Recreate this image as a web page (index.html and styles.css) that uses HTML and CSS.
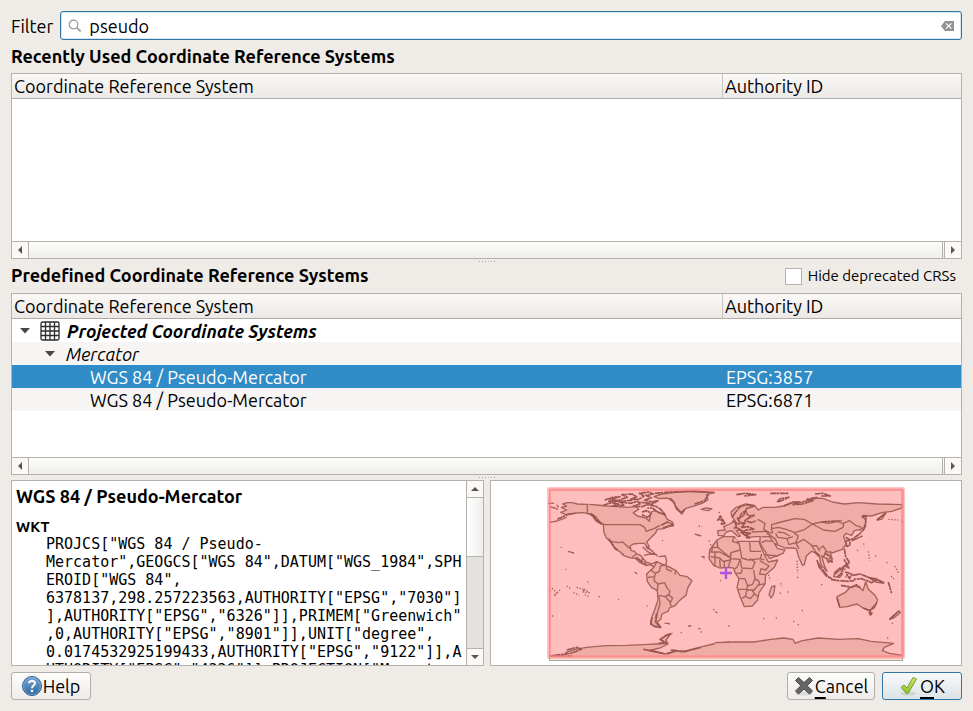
FILE: index.html
```html
<!DOCTYPE html>
<html lang="en">
<head>
<meta charset="utf-8">
<title>Coordinate Reference System Selector</title>
<link rel="stylesheet" href="styles.css">
</head>
<body>
<form class="dialog">
  <div class="filter">
    <label for="filter">Filter</label>
    <div class="search">
      <svg class="search-icon" viewBox="0 0 14 14" aria-hidden="true"><circle cx="5.5" cy="5.5" r="4.3"/><path d="M8.7 8.7L12.6 12.4" stroke-width="1.8"/></svg>
      <input id="filter" type="text" value="pseudo">
      <button class="clear" type="button" aria-label="Clear">
        <svg viewBox="0 0 13 10"><path d="M4 0H13V10H4L0 5Z" fill="#929292"/><path d="M5 2.3L10.4 7.7M10.4 2.3L5 7.7" stroke="#fff" stroke-width="1.2"/></svg>
      </button>
    </div>
  </div>

  <h2 class="heading">Recently Used Coordinate Reference Systems</h2>
  <section class="panel list">
    <table class="tree">
      <thead><tr><th>Coordinate Reference System</th><th class="auth">Authority ID</th></tr></thead>
    </table>
    <div class="hscroll">
      <button type="button" aria-label="Scroll left"><svg viewBox="0 0 8 8"><path d="M6 0V8L2 4Z"/></svg></button>
      <div class="hthumb"></div>
      <button type="button" aria-label="Scroll right"><svg viewBox="0 0 8 8"><path d="M2 0V8L6 4Z"/></svg></button>
    </div>
  </section>

  <div class="heading-row">
    <span class="grip"></span>
    <h2 class="heading">Predefined Coordinate Reference Systems</h2>
    <label class="check"><input type="checkbox">Hide deprecated CRSs</label>
  </div>
  <section class="panel list">
    <table class="tree">
      <thead><tr><th>Coordinate Reference System</th><th class="auth">Authority ID</th></tr></thead>
      <tbody>
        <tr><td class="group"><div class="node">
          <svg class="expander" viewBox="0 0 10 6"><path d="M0 0H10L5 5.5Z"/></svg>
          <svg class="grid-icon" viewBox="0 0 20 20"><rect x="1" y="1" width="18" height="18" rx="1.5"/><path d="M5.5 1V19M10 1V19M14.5 1V19M1 5.500H19M1 10H19M1 14.500H19"/></svg>
          Projected Coordinate Systems</div></td><td></td></tr>
        <tr class="alt"><td class="family"><div class="node">
          <svg class="expander" viewBox="0 0 10 6"><path d="M0 0H10L5 5.500Z"/></svg>
          Mercator</div></td><td></td></tr>
        <tr class="selected"><td class="crs">WGS 84 / Pseudo-Mercator</td><td>EPSG:3857</td></tr>
        <tr class="alt"><td class="crs">WGS 84 / Pseudo-Mercator</td><td>EPSG:6871</td></tr>
      </tbody>
    </table>
    <div class="hscroll">
      <button type="button" aria-label="Scroll left"><svg viewBox="0 0 8 8"><path d="M6 0V8L2 4Z"/></svg></button>
      <div class="hthumb"></div>
      <button type="button" aria-label="Scroll right"><svg viewBox="0 0 8 8"><path d="M2 0V8L6 4Z"/></svg></button>
    </div>
  </section>

  <div class="splitter"><span class="grip"></span></div>

  <div class="details">
    <section class="panel info">
      <div class="info-text">
        <h3>WGS 84 / Pseudo-Mercator</h3>
        <h4>WKT</h4>
        <code class="wkt">PROJCS["WGS 84 / Pseudo-<br>Mercator",GEOGCS["WGS 84",DATUM["WGS_1984",SPH<br>EROID["WGS 84",<br>6378137,298.257223563,AUTHORITY["EPSG","7030"]<br>],AUTHORITY["EPSG","6326"]],PRIMEM["Greenwich"<br>,0,AUTHORITY["EPSG","8901"]],UNIT["degree",<br>0.0174532925199433,AUTHORITY["EPSG","9122"]],A<br>UTHORITY["EPSG","4326"]],PROJECTION["Mercator_</code>
      </div>
      <div class="vscroll">
        <button type="button" aria-label="Scroll up"><svg viewBox="0 0 8 8"><path d="M0 6H8L4 2Z"/></svg></button>
        <div class="vthumb"></div>
        <div class="vtrack"></div>
        <button type="button" aria-label="Scroll down"><svg viewBox="0 0 8 8"><path d="M0 2H8L4 6Z"/></svg></button>
      </div>
    </section>
    <section class="panel map">
      <svg viewBox="491 481 470 184" role="img" aria-label="Area of use">
        <rect x="549.500" y="489.500" width="353" height="171" fill="#efe9dc" stroke="#a8a49e"/>
        <rect x="549" y="489" width="355" height="168" fill="#ffbebe"/>
        <g class="land" transform="translate(540 480) scale(.3333)">
          <path d="M82 68L68 72L80 78L64 82L80 90L62 97L78 104L94 101L110 99L130 98L148 102L160 110L172 124L190 134L192 158L200 175L212 185L226 206L238 214L250 226L268 233L288 236L300 248L320 257L330 254L345 262L350 245L334 252L318 246L308 234L302 226L290 222L284 214L274 212L270 198L280 192L298 190L314 190L324 206L328 200L320 186L334 172L346 160L352 148L372 146L384 137L400 138L398 126L382 118L374 104L358 98L344 92L334 96L330 110L328 124L318 114L292 108L280 98L296 88L288 80L262 82L232 80L200 78L170 75L142 73L112 72L96 68Z"/>
          <path d="M142 73V100L160 104L176 124L192 134H300L314 142L318 154L342 146L360 136M212 184L236 188L248 186L270 206M276 232L290 222M300 245L310 236"/>
          <path d="M342 50L358 56L382 54L400 66L410 88L426 102L436 86L456 80L486 70L504 60L500 44L520 38L490 36L446 34L402 38L366 42Z"/>
          <path d="M350 245L342 262L330 272L320 282L322 304L334 322L352 332L354 360L346 384L336 410L332 428L342 438L362 442L352 426L362 418L366 402L384 394L390 382L404 378L418 362L438 346L444 322L456 302L442 290L420 286L408 272L390 262L370 254Z"/>
          <path d="M332 270L346 280L358 274L362 258L378 254L380 268L396 274M346 280L344 290L324 292M344 292L342 302L354 312L352 332M354 312L374 308L380 322L390 334L386 344L376 350L358 346M386 344L398 354L390 370L394 378M356 346L360 372L352 398L348 426M376 350L390 366M408 272L404 284"/>
          <path d="M28 525L90 524L76 518L104 508L140 502L196 497L260 496L310 494L350 492L380 490L362 480L372 470L392 462L378 480L384 492L360 504L326 512L376 522L402 514L440 512L478 502L520 492L570 486V526Z" stroke="none"/>
          <path class="thin" d="M76 518L104 508L140 502L196 497L260 496L310 494L350 492L380 490L362 480L372 470L392 462L378 480L384 492L360 504L326 512L376 522L402 514L440 512L478 502L520 492L570 486"/>
          <path class="thin" d="M484 88L494 84L516 86L504 92ZM312 226L330 222L350 224L352 230M356 230L376 228L380 244L376 256M308 200L324 216L344 224M84 214L98 218M100 216V222M284 276L292 282M464 162L484 168M484 230H492V236M374 430H388V434M444 438H454M474 446H482M28 80L44 84L54 88M24 70H42M50 74L56 82M28 127L52 123L80 112"/>
          <path class="coast" d="M190 76L214 68L236 72L218 78L252 76L240 66L272 70L292 64L300 72L280 78L306 80L320 74L346 78L362 88L376 104L352 96L338 84L322 84M194 60L218 52L240 50L210 58L232 62L262 52L246 44L276 42L290 50L272 58L296 58L312 48L298 40L326 36L340 42L318 46L334 54L314 60L334 66L354 62L336 72L314 68L292 66M204 64L246 64L278 60M306 96L320 92L334 100L324 112L306 104M364 136L382 126L400 134L386 140L368 144M390 54L402 66L408 82L424 98L434 88M344 40L390 36L456 34L524 38M464 72L494 62L506 42"/>
          <path class="coast" d="M52 118L82 104L106 100M150 100L168 112L184 132L168 122L154 102M206 176L224 204L232 210M336 412L332 432L344 440L362 442L346 426L350 400M288 232L304 244L320 254M318 200L338 214L346 224M356 490L378 488L360 478L382 464L398 460M80 510L110 502L124 508L92 520L30 528L96 528M310 508L344 514L368 520L334 512M380 522L410 512L394 510L430 516L484 502"/>
          <path class="speck" d="M36 325L50 338L42 348L60 330M80 318L92 326M110 322L134 330L126 336L148 338L128 324M142 304L148 312M100 338L118 346M134 344L150 352M176 350H180M28 332H34M36 408H40M62 202H65M76 268H79M234 358H237M320 378H323M366 182H369M506 182L514 184M510 194H516M536 96L542 102M540 302H543M520 388L530 398M476 138L486 140M422 458H427M248 222H252M482 456H486"/>
        </g>
        <g class="land" transform="translate(715 480) scale(.3333)">
          <path d="M6 180L26 170L58 170L66 184L98 184L132 184L138 202L148 224L160 246L188 240L178 262L152 284L150 312L132 338L128 360L112 378L88 380L76 352L66 322L72 296L60 278L56 264L38 262L14 264L-4 256L-18 236L-16 210Z"/>
          <path d="M6 180L8 202L-6 202L-12 216L14 216L44 232L48 218L76 210L72 190L66 184M8 202L44 232M58 170L52 184L72 190M104 184L106 214H138M76 210L80 234L100 240L136 236L140 222M-14 230L14 234L24 244L46 240L48 218M46 240L40 262M48 236L76 238L66 262L58 268M76 238L80 264L112 266L120 246L104 236M62 280L78 280L82 268M72 296L90 296L98 318L112 314L120 296L116 270M68 328H96L98 312M96 328L92 348L80 356M96 330L118 330L130 314L150 312M92 350L106 356L118 342L130 350M110 330L120 342M134 242L152 252L162 258L152 270L138 266L134 282L152 284M120 296L132 304L134 318M136 236L148 240M0 216V260M14 238L16 262M28 242L28 264"/>
          <path d="M10 166L8 152L30 150L26 140L44 132L60 122L50 108L48 96L64 82L90 72L118 76L130 90L144 82L180 82L206 78L234 68L262 66L306 54L326 56L352 66L388 72L430 68L486 72L562 74L560 84L530 94L500 98L470 108L442 106L452 122L452 140L436 148L418 152L410 166L392 160L386 170L394 192L382 208L360 216L346 220L352 238L340 248L332 232L320 228L328 256L336 274L318 254L314 232L300 218L290 214L274 228L268 254L262 256L250 228L244 206L232 204L210 204L186 194L178 190L188 206L210 210L204 220L164 236L156 224L134 188L136 170L120 170L100 172L92 160L78 150L64 152L76 168L70 170L50 152L34 156L26 168Z"/>
          <path d="M128 118L150 130L146 148L164 158M170 134L198 126L240 116L268 118L292 132L270 148L240 158L214 148L190 142L170 146ZM292 132L320 126L340 130L368 124L386 132L384 142L360 154L326 150L292 132M384 130L404 122L422 136L440 142M238 160L250 168L242 188L222 194L216 176L188 172L182 160M216 176L234 170M244 190L266 178L290 196L306 198L314 214M290 196L302 216M242 188L252 206M156 160L180 176L188 192M110 156L148 154L170 160M140 170L164 170L176 188M148 182L170 184M314 206L324 198L336 216L350 216M332 214L326 232L344 238M188 156L206 158L224 168M168 146L174 160M138 188L150 184M150 224L190 228"/>
          <path d="M366 350L390 338L404 324L420 318L436 324L444 332L452 306L460 328L480 346L488 360L478 384L462 392L444 384L426 372L396 380L374 382Z"/>
          <path d="M170 320L180 318L176 342L168 354L162 344ZM536 414L524 418L542 402L552 392L556 398ZM486 120L514 98L500 118ZM392 268L374 264L360 276L356 290L374 292L384 280M460 292L484 296L506 310L482 306ZM462 398L472 398L466 406Z"/>
          <path d="M0 488L60 486L116 486L168 478L206 474L234 478L240 490L262 482L310 474L370 478L430 476L468 484L536 490L508 502L502 512L524 520L562 526H0Z" stroke="none"/>
          <path class="thin" d="M0 488L60 486L116 486L168 478L206 474L234 478L240 490L262 482L310 474L370 478L430 476L468 484L536 490L508 502L502 512L524 520L562 526"/>
          <path class="coast" d="M52 110L62 96L76 80L96 74L118 78L94 86L86 106L72 116L80 100L92 92L100 108L118 106L98 116L90 122L110 128L124 122M52 122L70 132L90 128L80 142L100 140L116 148L94 150L82 156L106 160L94 166L104 174L90 172M62 142L74 148L90 166L76 156M12 118L24 122L18 134L30 130L16 108L6 124M60 124L64 140L56 146M66 112L74 126L88 134M186 66L196 56L222 52L190 66M206 78L234 66L254 66L232 74L262 72L294 62L274 58L306 52M300 42L324 40L346 48L318 48M64 44L90 40L122 44L88 48M166 40L220 40"/>
          <path class="coast" d="M306 244L322 268L340 290L350 296L334 288L312 260L306 240M348 298L370 302L400 304L418 302M390 276L410 282L404 296L396 284L392 292M388 206L392 230L404 248L388 258L402 264L386 236M330 220L344 228L352 246L340 242M358 282L374 270L386 260L378 282L366 292M412 286L436 282L460 292L484 300L470 308L440 296L416 298M392 172L402 178L406 194L396 200L392 184L414 176L436 160L448 146L450 130M410 182L442 168M440 112L454 108L452 128M486 120L510 100M520 306L530 340M488 300L508 308M524 418L550 394M464 394L470 404M320 126L380 122M300 216L316 228M378 316L410 322L424 314L436 322M366 354L374 380M444 384L466 392L486 368"/>
          <path class="speck" d="M246 242L248 280M248 290V296M196 310L202 318M218 336H222M194 340L202 338M144 416H148M182 414L188 416M234 424H240M260 392H264M248 434H252M40 438H44M318 314H322M460 214L464 242M446 190L448 200M540 258L552 282M528 288L540 300M562 328H556M558 124H564M520 118L550 120M480 228H484M514 248H518M516 474H522M530 430H534M4 398H8M398 324L406 328M426 210L434 214M434 150L438 156M160 284L166 302"/>
        </g>
        <path d="M726 567V579M720 573H732" stroke="#b452dc" stroke-width="2.400"/>
        <rect x="549" y="489" width="354" height="168" fill="none" stroke="#ff8080" stroke-opacity=".45" stroke-width="4" stroke-linejoin="round"/>
        <rect x="549.500" y="489.500" width="353" height="167" fill="none" stroke="#ff8080" stroke-opacity=".6" stroke-width="2"/>
      </svg>
    </section>
  </div>

  <div class="actions">
    <button class="btn help" type="button">
      <svg viewBox="0 0 20 20" aria-hidden="true"><defs><linearGradient id="blue" x2="0" y2="1"><stop stop-color="#7aa9d6"/><stop offset="1" stop-color="#2c649f"/></linearGradient></defs><circle cx="10" cy="10" r="9.500" fill="url(#blue)" stroke="#2b5d92"/><circle cx="10" cy="10" r="8.500" fill="none" stroke="#8db4da" stroke-opacity=".7"/><path d="M7 7.200C7.600 4 13.200 4.200 12.900 7.500C12.700 9.600 10 9.600 10 12.200" fill="none" stroke="#fff" stroke-width="2"/><circle cx="10" cy="15" r="1.300" fill="#fff"/></svg>Help</button>
    <button class="btn cancel" type="button">
      <svg viewBox="0 0 20 20" aria-hidden="true"><ellipse cx="10" cy="17.500" rx="9" ry="2" fill="#dcdad8"/><path d="M4.500 1.500L10 6.500L15.500 1.500L18.500 4.500L13.200 9.700L18.500 15L15.500 18L10 13L4.500 18L1.500 15L6.800 9.700L1.500 4.500Z" fill="#666" stroke="#484848" stroke-linejoin="round"/></svg><span><u>C</u>ancel</span></button>
    <button class="btn ok" type="submit">
      <svg viewBox="0 0 20 20" aria-hidden="true"><defs><linearGradient id="green" x2="0" y2="1"><stop stop-color="#d2ec6c"/><stop offset="1" stop-color="#8fbe2c"/></linearGradient></defs><ellipse cx="9" cy="17.500" rx="8" ry="2" fill="#cfd3d4"/><path d="M2 11.500L5 9L8 12L14 1.500L17.500 3L9 17.500H7.500Z" fill="url(#green)" stroke="#779b2b" stroke-linejoin="round"/></svg><span><u>O</u>K</span></button>
  </div>
</form>
</body>
</html>
```
FILE: styles.css
```css
* { box-sizing: border-box; }
body {
  margin: 0;
  background: #efebe7;
  color: #000;
  font: 18px/22px Ubuntu, "Noto Sans", sans-serif;
}
button, input { font: inherit; color: inherit; margin: 0; }
button { padding: 0; }
svg { display: block; }
.dialog {
  display: grid;
  grid-template-rows: 29px 33px minmax(0, 93fr) 34px minmax(0, 91fr) 5px minmax(0, 93fr) 34px;
  height: 100vh;
  min-height: 480px;
  padding: 11px;
}

.filter { display: flex; align-items: center; gap: 7px; }
.search {
  flex: 1;
  display: flex;
  align-items: center;
  height: 29px;
  padding: 0 7px;
  background: #fff;
  border: 1px solid #2f76a5;
  border-radius: 3px;
  box-shadow: inset 0 0 0 1px #d5e6f0;
}
.search-icon { width: 14px; height: 14px; fill: none; stroke: #999; stroke-width: 1.2; }
.search input {
  flex: 1;
  min-width: 0;
  padding: 0 7px;
  border: 0;
  outline: 0;
  background: none;
}
.clear { border: 0; background: none; }
.clear svg { width: 13px; height: 10px; }

.heading { margin: 0; font-size: 18px; font-weight: bold; line-height: 32px; white-space: nowrap; }
.heading-row { position: relative; display: flex; justify-content: space-between; align-items: flex-start; }
.check { display: flex; align-items: center; gap: 6px; height: 34px; padding-right: 6px; font-size: 15px; }
.check input {
  appearance: none;
  width: 17px;
  height: 17px;
  background: #fff;
  border: 1px solid #b6b2ae;
}
.grip {
  position: absolute;
  top: 2px;
  left: 50%;
  width: 17px;
  height: 1px;
  margin-left: -8px;
  background: repeating-linear-gradient(90deg, #aaa6a2 0 1px, transparent 1px 3px);
}
.splitter { position: relative; }

.panel { background: #fff; border: 1px solid #b5b1ad; overflow: hidden; min-width: 0; }
.list { display: flex; flex-direction: column; justify-content: space-between; }
.tree { width: 100%; table-layout: fixed; border-collapse: separate; border-spacing: 0; }
.tree th {
  height: 25px;
  padding: 0 2px;
  text-align: left;
  font-weight: normal;
  background: linear-gradient(#fbf9f7, #ebe8e5);
  border-bottom: 1px solid #aeaaa6;
}
.tree .auth { width: 239px; border-left: 1px solid #c8c4c0; }
.tree td { height: 23px; padding: 0 4px; white-space: nowrap; }
.tree .alt { background: #f6f5f4; }
.tree .selected { background: #308cc6; color: #fff; }
.tree .group { padding-left: 8px; font-weight: bold; font-style: italic; }
.tree .family { padding-left: 33px; font-style: italic; }
.tree .crs { padding-left: 78px; }
.node { display: flex; align-items: center; height: 22px; }
.expander { width: 10px; height: 6px; margin-right: 11px; fill: #484643; }
.group .expander { margin-right: 10px; }
.grid-icon { width: 20px; height: 20px; margin-right: 7px; fill: #fff; stroke: #2d2d2d; stroke-width: 1.3; }

.hscroll { display: flex; height: 17px; border-top: 1px solid #b5b1ad; }
.hscroll button, .vscroll button {
  display: grid;
  place-items: center;
  width: 16px;
  height: 16px;
  border: 0;
  background: #faf9f8;
}
.hscroll svg, .vscroll svg { width: 8px; height: 8px; fill: #5a5754; }
.hthumb {
  flex: 1;
  border-left: 1px solid #b5b1ad;
  border-right: 3px double #b5b1ad;
  background: linear-gradient(#fdfdfc, #efeeec);
}

.details { display: grid; grid-template-columns: 473fr 472fr; gap: 6px; min-height: 0; }
.info { display: flex; }
.info-text { flex: 1; min-width: 0; padding: 4px; overflow: hidden; }
.info h3 { margin: 0; font-size: 18px; line-height: 22px; }
.info h4 { margin: 11px 0 0; font-size: 15px; line-height: 17px; }
.wkt { display: block; padding-left: 30px; font: 15px/18px "DejaVu Sans Mono", monospace; white-space: nowrap; }
.vscroll { display: flex; flex-direction: column; width: 17px; border-left: 1px solid #b5b1ad; }
.vthumb {
  flex: 59;
  border: solid #b5b1ad;
  border-width: 1px 0;
  background: linear-gradient(90deg, #fff, #efeeec);
}
.vtrack { flex: 92; background: #e3e2df; border-bottom: 1px solid #b5b1ad; }
.map svg { width: 100%; height: 100%; }
.land { fill: #f0aca6; stroke: #a5625b; stroke-width: 4; stroke-linejoin: round; }
.land .thin, .land .coast, .land .speck { fill: none; }
.land .coast { stroke: #9b544e; stroke-width: 5; stroke-dasharray: 17 1 8 2; }
.land .speck { stroke-width: 4; stroke-dasharray: 4 5; }

.actions { display: flex; align-items: flex-end; gap: 7px; }
.btn {
  display: flex;
  align-items: center;
  justify-content: center;
  width: 80px;
  height: 28px;
  border: 1px solid #b1ada9;
  border-radius: 3px;
  background: linear-gradient(#fdfdfc, #eeecea);
}
.btn svg { width: 20px; height: 20px; margin-right: 1px; }
.btn u { text-decoration-thickness: 2px; text-underline-offset: 4px; }
.cancel { width: 88px; margin-left: auto; }
.ok { border-color: #2f76a5; background: linear-gradient(#f8fafb, #dce3e6); }
```
